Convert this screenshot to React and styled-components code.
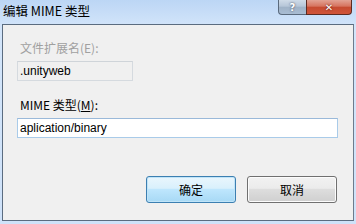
import React from "react";
import styled, { createGlobalStyle } from "styled-components";

const Global = createGlobalStyle`
  html, body { margin: 0; padding: 0; width: 356px; height: 224px; overflow: hidden; }
  body { font-family: "Noto Sans CJK SC", "Liberation Sans", sans-serif; font-size: 12px; }
`;

const Frame = styled.div`
  width: 356px;
  height: 224px;
  box-sizing: border-box;
  background: linear-gradient(180deg, #bcd6f5 0%, #d3e5fa 12%, #cfe2f9 100%);
  display: flex;
  flex-direction: column;
  padding: 0 2px 3px 2px;
`;

const TitleBar = styled.div`
  height: 24px;
  display: flex;
  align-items: flex-start;
  justify-content: space-between;
`;

const Title = styled.div`
  font-size: 12.5px;
  color: #000;
  line-height: 14px;
  padding: 4px 0 0 1px;
`;

const Caption = styled.div`
  display: flex;
  margin-right: 2px;
`;

const CapBtn = styled.div`
  height: 15px;
  box-sizing: border-box;
  display: flex;
  align-items: center;
  justify-content: center;
  color: #fff;
  font-family: "DejaVu Sans", sans-serif;
  font-weight: bold;
  border: 1px solid #5a6a7d;
  border-top: none;
`;

const HelpBtn = styled(CapBtn)`
  width: 28px;
  border-radius: 0 0 0 4px;
  border-right: none;
  background: linear-gradient(180deg, #cfdbe8 0%, #b6c6d8 45%, #9fb2c7 50%, #a9bdd3 100%);
  font-size: 10px;
  text-shadow: 0 0 2px #334;
`;

const CloseBtn = styled(CapBtn)`
  width: 46px;
  border-radius: 0 0 4px 0;
  border-color: #5c2b22;
  background: linear-gradient(180deg, #e2a294 0%, #d6735e 45%, #c54a30 50%, #d0553a 100%);
  font-size: 10px;
  text-shadow: 0 0 2px #400;
`;

const Client = styled.div`
  flex: 1;
  background: #f0f0f0;
  border: 1px solid #5b6c80;
  border-right-color: #6d7b8c;
  padding: 16px 16px 0 14px;
  display: flex;
  flex-direction: column;
`;

const Label = styled.div`
  font-size: 12px;
  line-height: 14px;
  color: ${p => (p.$disabled ? "#a0a0a0" : "#000")};
  padding-left: 3px;
  margin-bottom: 6px;
  u { text-decoration: underline; }
`;

const Box = styled.div`
  height: 20px;
  box-sizing: border-box;
  width: ${p => p.$w};
  border: 1px solid ${p => (p.$disabled ? "#d5dadf" : "#a9cbe9")};
  border-top-color: ${p => (p.$disabled ? "#cfd4d9" : "#9ab9d9")};
  background: ${p => (p.$disabled ? "#f0f0f0" : "#fff")};
  font-family: "Liberation Sans", sans-serif;
  font-size: 12px;
  line-height: 18px;
  padding-left: 2px;
  color: #000;
  margin-bottom: ${p => p.$mb || "0"};
`;

const Buttons = styled.div`
  margin-top: auto;
  margin-bottom: 17px;
  display: flex;
  justify-content: flex-end;
  gap: 11px;
`;

const Button = styled.div`
  width: 90px;
  height: 27px;
  box-sizing: border-box;
  border-radius: 3px;
  display: flex;
  align-items: center;
  justify-content: center;
  font-size: 12px;
  color: #000;
  border: 1px solid ${p => (p.$primary ? "#3c7fb1" : "#707070")};
  background: ${p =>
    p.$primary
      ? "linear-gradient(180deg, #eaf6fd 0%, #d9f0fc 45%, #bee6fd 50%, #a7d9f5 100%)"
      : "linear-gradient(180deg, #f2f2f2 0%, #ebebeb 45%, #dddddd 50%, #cfcfcf 100%)"};
  box-shadow: inset 0 0 0 1px ${p => (p.$primary ? "#c0e4f8" : "#fcfcfc")};
`;

export default function App() {
  return (
    <>
      <Global />
      <Frame>
        <TitleBar>
          <Title>编辑 MIME 类型</Title>
          <Caption>
            <HelpBtn>?</HelpBtn>
            <CloseBtn>✕</CloseBtn>
          </Caption>
        </TitleBar>
        <Client>
          <Label $disabled>文件扩展名(E):</Label>
          <Box $disabled $w="116px" $mb="17px">.unityweb</Box>
          <Label>MIME 类型(<u>M</u>):</Label>
          <Box $w="321px">aplication/binary</Box>
          <Buttons>
            <Button $primary>确定</Button>
            <Button>取消</Button>
          </Buttons>
        </Client>
      </Frame>
    </>
  );
}
